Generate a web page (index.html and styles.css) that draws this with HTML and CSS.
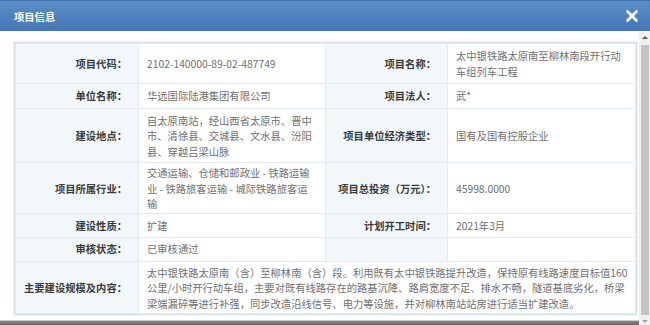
FILE: index.html
```html
<!DOCTYPE html>
<html lang="zh-CN">
<head>
<meta charset="utf-8">
<title>项目信息</title>
<link rel="stylesheet" href="styles.css">
</head>
<body>
<div class="modal">
  <div class="header">
    <span class="title">项目信息</span>
    <svg class="close" width="12" height="12" viewBox="0 0 12 12"><path d="M1.5 1.5 L10.5 10.5 M10.5 1.5 L1.5 10.5" stroke="#fff" stroke-width="2.6" stroke-linecap="round"/></svg>
  </div>
  <div class="body">
    <div class="content">
      <div class="panel">
        <table class="info">
          <colgroup>
            <col class="c-label1"><col class="c-value1"><col class="c-label2"><col class="c-value2">
          </colgroup>
          <tr>
            <th>项目代码：</th><td>2102-140000-89-02-487749</td>
            <th>项目名称：</th><td>太中银铁路太原南至柳林南段开行动<br>车组列车工程</td>
          </tr>
          <tr>
            <th>单位名称：</th><td>华远国际陆港集团有限公司</td>
            <th>项目法人：</th><td>武*</td>
          </tr>
          <tr class="tall">
            <th>建设地点：</th><td>自太原南站，经山西省太原市、晋中<br>市、清徐县、交城县、文水县、汾阳<br>县、穿越吕梁山脉</td>
            <th>项目单位经济类型：</th><td>国有及国有控股企业</td>
          </tr>
          <tr class="tight">
            <th>项目所属行业：</th><td>交通运输、仓储和邮政业 - 铁路运输<br>业 - 铁路旅客运输 - 城际铁路旅客运<br>输</td>
            <th>项目总投资（万元）：</th><td>45998.0000</td>
          </tr>
          <tr>
            <th>建设性质：</th><td>扩建</td>
            <th>计划开工时间：</th><td>2021年3月</td>
          </tr>
          <tr class="short">
            <th>审核状态：</th><td>已审核通过</td>
            <th></th><td></td>
          </tr>
          <tr class="tall2">
            <th>主要建设规模及内容：</th>
            <td colspan="3">太中银铁路太原南（含）至柳林南（含）段。利用既有太中银铁路提升改造，保持原有线路速度目标值160<br>公里/小时开行动车组，主要对既有线路存在的路基沉降、路肩宽度不足、排水不畅，隧道基底劣化，桥梁<br>梁端漏碎等进行补强，同步改造沿线信号、电力等设施，并对柳林南站站房进行适当扩建改造。</td>
          </tr>
        </table>
      </div>
      <div class="spacer"></div>
      <div class="bottom-strip"></div>
    </div>
    <div class="scrollbar">
      <div class="arrow up"></div>
      <div class="thumb"></div>
      <div class="arrow down"></div>
    </div>
  </div>
</div>
</body>
</html>
```

FILE: styles.css
```css
* { box-sizing: border-box; }
html, body { margin: 0; padding: 0; background: #fff; }
body {
  font-family: "Noto Sans CJK SC", "Noto Sans", sans-serif;
  font-size: 10.3px;
}
.modal {
  width: 650px;
  height: 325px;
  display: flex;
  flex-direction: column;
  overflow: hidden;
}
.header {
  height: 31px;
  flex: none;
  background: linear-gradient(#5a8ec8, #4577b4);
  border-top: 1px solid #3e6ea8;
  display: flex;
  align-items: center;
  justify-content: space-between;
  padding: 0 12px 0 14px;
}
.title {
  color: #fff;
  font-weight: bold;
  font-size: 10.3px;
}
.close { display: block; }
.body {
  flex: 1;
  display: flex;
  min-height: 0;
}
.content {
  flex: 1;
  display: flex;
  flex-direction: column;
  padding: 11px 2px 0 14px;
}
.panel {
  border: 1px solid #d3e0e8;
  box-shadow: 0 0 2px rgba(120, 150, 170, 0.25);
}
.info {
  width: 620px;
  table-layout: fixed;
  border-collapse: collapse;
  border: 1px solid #e2ebf0;
}
.c-label1 { width: 123px; }
.c-value1 { width: 187px; }
.c-label2 { width: 122px; }
.c-value2 { width: 188px; }
.info th, .info td {
  border: 1px solid #e2ebf0;
  line-height: 15.5px;
  padding: 4px 8px 4px 8px;
  vertical-align: middle;
  font-size: 10.3px;
  white-space: nowrap;
}
.info th {
  background: #f2f8fa;
  color: #3a3a3a;
  font-weight: bold;
  text-align: right;
  padding-right: 11px;
}
.info td {
  color: #707070;
  text-align: left;
  background: #fff;
}
.info tr.tall th, .info tr.tall td { padding-top: 4px; padding-bottom: 3px; }
.info tr.tight th, .info tr.tight td { padding-top: 2px; padding-bottom: 1px; }
.info tr.tall2 th, .info tr.tall2 td { padding-top: 3px; padding-bottom: 2px; }
.info tr.short th, .info tr.short td { padding-top: 3px; padding-bottom: 4px; }
.spacer { flex: 1; }
.bottom-strip {
  height: 5px;
  margin: 0 -2px 0 -14px;
  border-top: 1px solid #c9c9c9;
  background: linear-gradient(#8a8a8a, #666);
}
.scrollbar {
  width: 12px;
  flex: none;
  background: #f1f1f1;
  display: flex;
  flex-direction: column;
  align-items: center;
  padding: 5px 0 2px;
}
.arrow {
  width: 0;
  height: 0;
  border-left: 3px solid transparent;
  border-right: 3px solid transparent;
  flex: none;
}
.arrow.up { border-bottom: 3px solid #555; margin-bottom: 6px; }
.arrow.down { border-top: 3px solid #a0a0a0; margin-top: 4px; }
.thumb {
  width: 8px;
  flex: 1;
  background: #c4c4c4;
  margin-bottom: 1px;
}
```
